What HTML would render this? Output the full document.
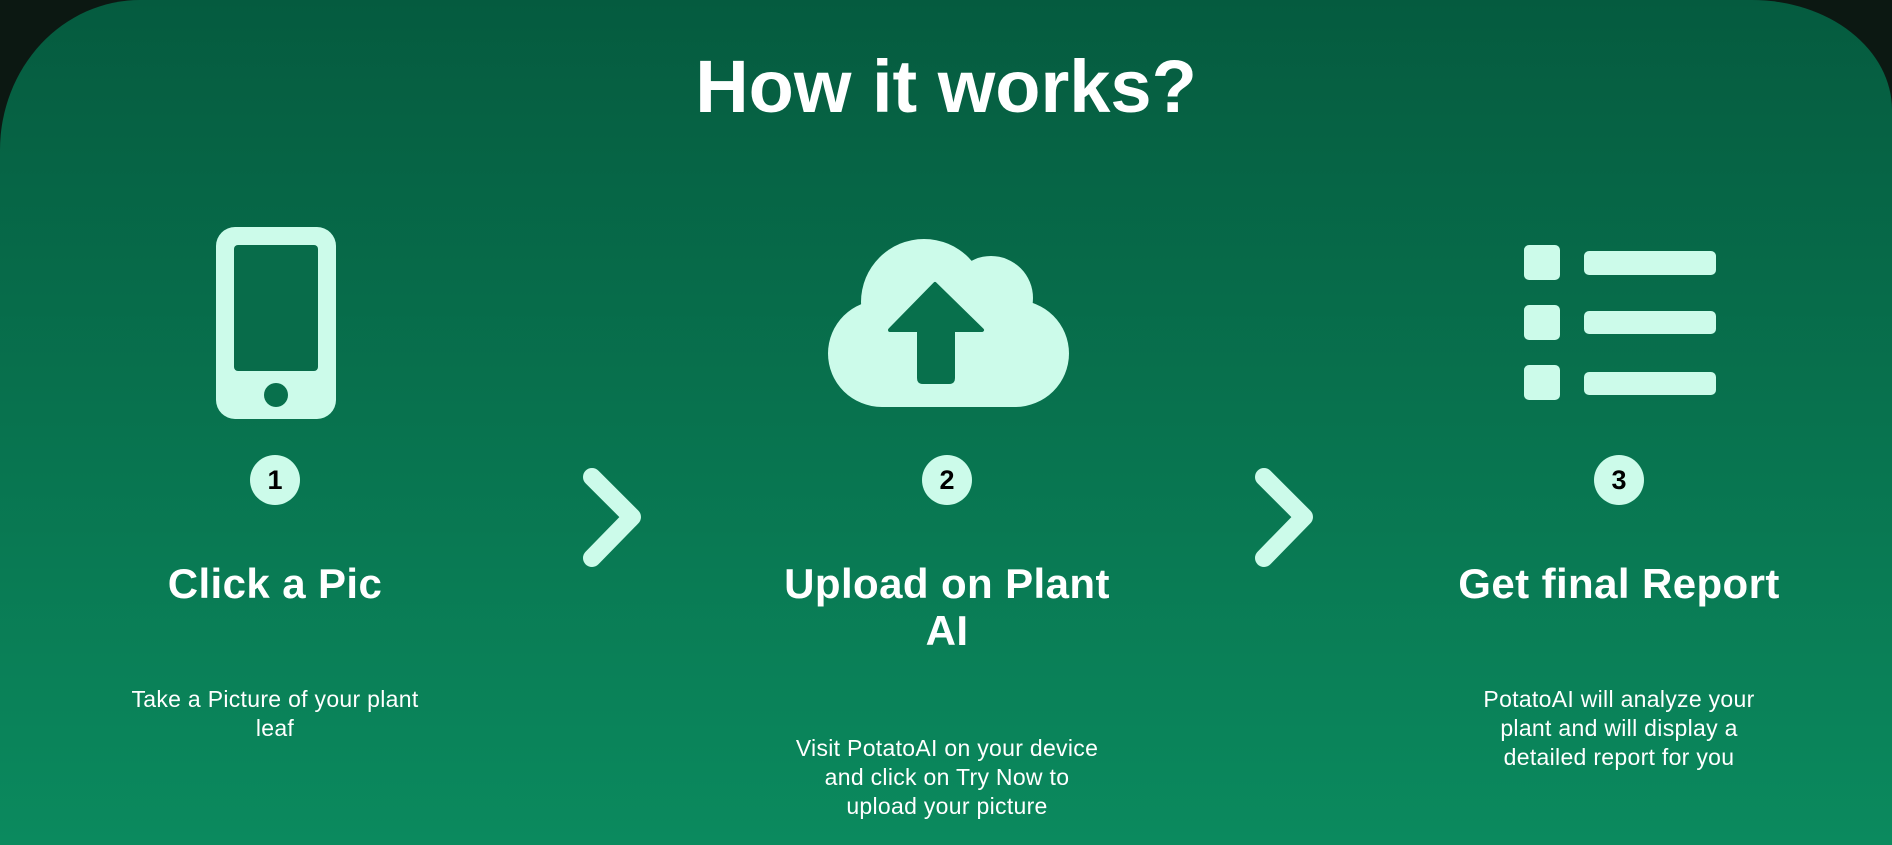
<!DOCTYPE html>
<html><head><meta charset="utf-8">
<style>
html,body{margin:0;padding:0;width:1892px;height:845px;overflow:hidden;background:#0c1812;font-family:"Liberation Sans",sans-serif;}
.card{position:absolute;left:0;top:0;width:1892px;height:845px;border-radius:140px 140px 0 0/150px 110px 0 0;background:linear-gradient(#055b3f,#0b8a5e);}
svg{position:absolute;left:0;top:0}
.t{position:absolute;color:#fff;text-align:center;}
h1{position:absolute;left:0;width:1892px;top:44px;margin:0;text-align:center;color:#fff;font-size:74px;font-weight:bold;}
.h{font-size:42px;letter-spacing:0.4px;font-weight:bold;line-height:47px;width:400px;top:560px;}
.d{font-size:23px;letter-spacing:0.3px;line-height:29px;width:400px;}
.n{position:absolute;width:50px;height:50px;border-radius:50%;background:#ccfbea;color:#000;font-weight:bold;font-size:27px;line-height:50px;text-align:center;top:455px;}
</style></head><body>
<div class="card"></div>
<h1>How it works?</h1>
<svg width="1892" height="845" viewBox="0 0 1892 845">
<g fill="#ccfbea">
<rect x="216" y="227" width="120" height="192" rx="19"/>
</g>
<rect x="234" y="245" width="84" height="126" rx="4" fill="#086c4a"/>
<circle cx="276" cy="395" r="12" fill="#08704c"/>
<g fill="#ccfbea">
<circle cx="924" cy="302" r="63"/>
<circle cx="991" cy="298" r="42"/>
<rect x="828" y="300" width="241" height="107" rx="54"/>
</g>
<path d="M935 284 L982 330 L953 330 L953 378 Q953 382 949 382 L923 382 Q919 382 919 378 L919 330 L890 330 Z" fill="#08704c" stroke="#08704c" stroke-width="4" stroke-linejoin="round"/>
<g fill="#ccfbea">
<rect x="1524" y="245" width="36" height="35" rx="5"/>
<rect x="1524" y="305" width="36" height="35" rx="5"/>
<rect x="1524" y="365" width="36" height="35" rx="5"/>
<rect x="1584" y="251" width="132" height="24" rx="5"/>
<rect x="1584" y="311" width="132" height="23" rx="5"/>
<rect x="1584" y="372" width="132" height="23" rx="5"/>
</g>
<g fill="none" stroke="#ccfbea" stroke-width="18" stroke-linecap="round" stroke-linejoin="round">
<path d="M592 477 L632 517 L592 558"/>
<path d="M1264 477 L1304 517 L1264 558"/>
</g>
</svg>
<div class="n" style="left:250px">1</div>
<div class="n" style="left:922px">2</div>
<div class="n" style="left:1594px">3</div>
<div class="t h" style="left:75px">Click a Pic</div>
<div class="t h" style="left:747px">Upload on Plant<br>AI</div>
<div class="t h" style="left:1419px">Get final Report</div>
<div class="t d" style="left:75px;top:685px">Take a Picture of your plant<br>leaf</div>
<div class="t d" style="left:747px;top:734px">Visit PotatoAI on your device<br>and click on Try Now to<br>upload your picture</div>
<div class="t d" style="left:1419px;top:685px">PotatoAI will analyze your<br>plant and will display a<br>detailed report for you</div>
</body></html>
